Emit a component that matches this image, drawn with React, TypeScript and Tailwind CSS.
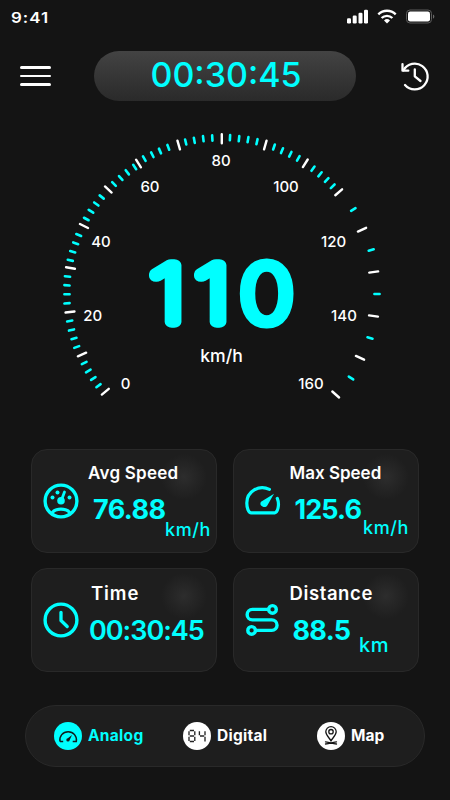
import React from "react";

type Point = [number, number];

const CENTER: Point = [222, 294];

const MAJOR: Point[] = [
  [105.3, 391.7], [82, 354.5], [70, 312], [70.5, 268], [84, 226], [108.3, 189.5],
  [138.5, 163.5], [178.7, 145], [221.8, 138.7], [265.3, 145], [305.3, 163.3],
  [338.7, 192.3], [362, 229.7], [373.7, 272], [373.5, 316], [360, 357.8], [335.7, 394.5],
];

const MINOR: Point[] = [
  [98.5, 385.7], [93.3, 378.5], [88.3, 371], [84.2, 363], [76.7, 347], [74, 338.5],
  [71.5, 330], [69.7, 321], [67, 303.3], [67, 294.3], [67, 285.3], [67.5, 276.5],
  [70.3, 260.3], [72.7, 251.7], [75.7, 243.3], [78.7, 235], [86.3, 219], [91, 211.3],
  [96.3, 204], [101.7, 197], [114, 184], [120.7, 178], [127.3, 172.3], [134.7, 167],
  [144.3, 158.7], [152.3, 154.7], [160, 151], [168.3, 147.3], [185.7, 142],
  [194.3, 140.3], [203.3, 138.7], [212.3, 138], [230, 137.7], [239, 138.7],
  [248, 139.7], [257, 141.7], [274, 147], [282, 150.7], [290.3, 154.3], [298.3, 158.3],
  [313, 168.7], [320, 174.3], [326.7, 180], [332.7, 186.3], [353.3, 209.5],
  [371.2, 250], [377, 294], [370, 338], [351, 378],
];

const LABELS: [string, number, number][] = [
  ["0", 125.6, 388.8], ["20", 92.8, 320.6], ["40", 101, 246.6], ["60", 150, 192.2],
  ["80", 221, 166], ["100", 286, 192.2], ["120", 333.5, 246.6], ["140", 344, 320.6],
  ["160", 311, 388.8],
];

function Tick({ at, half, color, width }: { at: Point; half: number; color: string; width: number }) {
  const dx = at[0] - CENTER[0];
  const dy = at[1] - CENTER[1];
  const r = Math.hypot(dx, dy);
  const ux = (dx / r) * half;
  const uy = (dy / r) * half;
  return (
    <line x1={at[0] - ux} y1={at[1] - uy} x2={at[0] + ux} y2={at[1] + uy}
      stroke={color} strokeWidth={width} strokeLinecap="round" />
  );
}

function Gauge() {
  return (
    <svg className="block h-[290px] w-[450px]" viewBox="0 120 450 290" fontFamily="Inter, sans-serif">
      {MINOR.map((p, i) => <Tick key={i} at={p} half={2.6} color="#00ffff" width={2.6} />)}
      {MAJOR.map((p, i) => <Tick key={i} at={p} half={4.5} color="#ffffff" width={2.4} />)}
      {LABELS.map(([t, x, y]) => (
        <text key={t} x={x} y={y} textAnchor="middle" fontSize="15" fontWeight="500" fill="#fff">{t}</text>
      ))}
      <g fill="#00ffff" stroke="#00ffff" strokeWidth="11.6" strokeLinejoin="round" strokeLinecap="round" fontSize="78.5" fontWeight="100">
        <text transform="translate(149.2 322.3) scale(1.25 1)">1</text>
        <text transform="translate(194.2 322.3) scale(1.25 1)">1</text>
        <text transform="translate(240 322.3) scale(1.15 1)">0</text>
      </g>
      <text x="221.5" y="362.3" textAnchor="middle" fontSize="17.6" fontWeight="500" fill="#fff">km/h</text>
    </svg>
  );
}

function StatusBar() {
  return (
    <div className="flex h-[51px] items-start justify-between pl-[11px] pr-[14px] pt-[9px]">
      <span className="mt-px origin-left scale-x-[1.13] text-[15px] font-semibold leading-none tracking-[0.9px]">9:41</span>
      <svg className="h-[15px] w-[89px]" viewBox="347 8.5 89 15" fill="#fff">
        <rect x="347" y="17.7" width="4" height="5.3" rx="1.2" />
        <rect x="352.7" y="15" width="4" height="8" rx="1.2" />
        <rect x="358.5" y="12.3" width="4" height="10.7" rx="1.2" />
        <rect x="364" y="9.3" width="4" height="13.7" rx="1.2" />
        <g fill="none" stroke="#fff" strokeWidth="2.4">
          <path d="M378.3 13.8a12.6 12.6 0 0 1 17.4 0" />
          <path d="M381.6 17.5a7.8 7.8 0 0 1 10.8 0" />
        </g>
        <path d="M384 20a4.4 4.4 0 0 1 6 0l-3 3z" />
        <rect x="406.5" y="9.5" width="25" height="13" rx="3.5" fill="none" stroke="#5b5b5b" />
        <rect x="408" y="11" width="22" height="10" rx="2.2" />
        <path d="M433 14v4.2a2.3 2.3 0 0 0 0-4.2z" fill="#6a6a6a" />
      </svg>
    </div>
  );
}

function Header() {
  return (
    <header className="flex h-[50px] items-center pl-5 pr-5">
      <button className="flex w-[31px] flex-col gap-[5.5px]" aria-label="Menu">
        <span className="h-[2.8px] w-full rounded-full bg-white" />
        <span className="h-[2.8px] w-full rounded-full bg-white" />
        <span className="h-[2.8px] w-full rounded-full bg-white" />
      </button>
      <div className="ml-[43px] flex h-[50px] w-[262px] justify-center rounded-full bg-linear-to-b from-[#434343] to-[#2a2a2a] pl-[2px] pt-[6.5px]">
        <span className="text-[34px] font-medium leading-none text-[#00ffff]">00:30:45</span>
      </div>
      <svg className="ml-auto h-[30px] w-[30px]" viewBox="400 61 30 30" fill="none" stroke="#fff" strokeWidth="2.3" strokeLinecap="round" strokeLinejoin="round">
        <path d="M403.5 70.2A12.9 12.9 0 1 1 405 85" />
        <path d="M402.5 64.2V70.7H408.3" />
        <path d="M414.8 69.5V76.3L420.5 81" />
      </svg>
    </header>
  );
}

function AvgIcon() {
  return (
    <svg className="h-9 w-9" viewBox="0 0 36 36" fill="none" stroke="#00ffff" strokeWidth="3.4" strokeLinecap="round">
      <circle cx="18" cy="18" r="15.9" />
      <path d="M9 30C12 24.8 24 24.8 27 30" strokeWidth="3.2" />
      <g fill="#00ffff" stroke="none">
        <circle cx="9.5" cy="14.6" r="2" />
        <circle cx="14.5" cy="9.5" r="2" />
        <circle cx="26.5" cy="14.6" r="2" />
        <circle cx="18" cy="17.8" r="3.8" />
      </g>
      <path d="M18.5 17L21.5 9" strokeWidth="2.8" />
    </svg>
  );
}

function MaxIcon() {
  return (
    <svg className="h-9 w-9" viewBox="0 0 36 36" fill="none" stroke="#00ffff" strokeWidth="3.2" strokeLinecap="round" strokeLinejoin="round">
      <path d="M24.4 6.4C14 1.3 1.8 8.5 1.8 20C1.8 25 3.6 29.8 6.2 29.8H29.8C32.4 29.6 35 22 32.3 15.4" />
      <path d="M29 10.8L22.3 22.5C20 26.2 13.4 22.8 16 18.8Z" fill="#00ffff" stroke="none" />
    </svg>
  );
}

function ClockIcon() {
  return (
    <svg className="h-9 w-9" viewBox="0 0 36 36" fill="none" stroke="#00ffff" strokeWidth="3.4" strokeLinecap="round" strokeLinejoin="round">
      <circle cx="18" cy="18" r="15.9" />
      <path d="M18 10.3V18.5L24.2 24.5" strokeWidth="3.3" />
    </svg>
  );
}

function RouteIcon() {
  return (
    <svg className="h-9 w-9" viewBox="0 0 36 36" fill="none" stroke="#00ffff" strokeWidth="3.4" strokeLinecap="round">
      <circle cx="27.5" cy="7.4" r="3.8" />
      <circle cx="6.6" cy="28.4" r="3.8" />
      <path d="M23.5 7.4H7.4A5.2 5.2 0 0 0 7.4 17.9H26.8A5.2 5.2 0 0 1 26.8 28.4H10.6" />
    </svg>
  );
}

type CardProps = {
  icon: React.ReactNode;
  title: string;
  value: string;
  unit?: string;
  columnClass: string;
  titleClass: string;
  valueClass: string;
  unitClass?: string;
};

function StatCard({ icon, title, value, unit, columnClass, titleClass, valueClass, unitClass = "" }: CardProps) {
  return (
    <section className="flex h-[104px] w-[186px] rounded-2xl border border-[#292929] bg-[radial-gradient(circle_23px_at_152px_27px,#2d2d2d,#262626_45%,#1e1e1e)] pl-[11px] pt-[33px]">
      <div className="h-9 w-9 shrink-0">{icon}</div>
      <div className={`flex flex-col items-start whitespace-nowrap leading-none ${columnClass}`}>
        <h2 className={`font-semibold leading-none ${titleClass}`}>{title}</h2>
        <p className={`text-[27px] leading-none text-[#00ffff] ${valueClass}`}>{value}</p>
        {unit && <span className={`leading-none text-[#00ffff] ${unitClass}`}>{unit}</span>}
      </div>
    </section>
  );
}

function BottomNav() {
  return (
    <nav className="mx-[25px] flex h-[62px] items-center rounded-full border border-[#292929] bg-[#1e1e1e] pl-7 text-[15.5px] font-bold leading-none">
      <div className="flex w-[129px] items-center gap-[6px] text-[#00ffff]">
        <svg className="h-7 w-7" viewBox="0 0 28 28" fill="none" stroke="#101b1b" strokeWidth="1.5">
          <circle cx="14" cy="14" r="14" fill="#00ffff" stroke="none" />
          <path d="M6 19.5A8.3 8.3 0 1 1 22.3 19.5H18.7M6 19.5H9.2" />
          <path d="M18 13L15.7 18A1.7 1.7 0 1 1 13.8 16.2Z" fill="#101b1b" stroke="none" />
        </svg>
        <span className="tracking-[0.3px]">Analog</span>
      </div>
      <div className="flex w-[134px] items-center gap-[6px]">
        <svg className="h-7 w-7" viewBox="0 0 28 28" fill="none" stroke="#252525" strokeWidth="1.35">
          <circle cx="14" cy="14" r="14" fill="#fff" stroke="none" />
          <path d="M6.8 8.5H11M6.8 14H11M6.8 19.5H11" />
          <path d="M6 9.2V13.2M6 14.8V18.9M11.8 9.2V13.2M11.8 14.8V18.9M16.4 9.2V13.2M22 9.2V13.2M22 14.8V19.5M17 14H21.2" />
        </svg>
        <span className="tracking-[0.25px]">Digital</span>
      </div>
      <div className="flex items-center gap-[6px]">
        <svg className="h-7 w-7" viewBox="0 0 28 28" fill="none" stroke="#161616" strokeWidth="1.3" strokeLinecap="round">
          <circle cx="14" cy="14" r="14" fill="#fff" stroke="none" />
          <path d="M14 18.8C12 15.5 8.8 13 8.8 9.8A5.2 5.2 0 0 1 19.2 9.8C19.2 13 16 15.5 14 18.8Z" />
          <circle cx="14" cy="9.7" r="2.2" />
          <path d="M8.5 19.8C11 20 16 22 19.5 22M19.5 19.8C17 20 12 22 8.5 22" />
        </svg>
        <span>Map</span>
      </div>
    </nav>
  );
}

export default function App() {
  return (
    <main className="h-[800px] w-[450px] overflow-hidden bg-[#141414] font-[Inter,sans-serif] text-white">
      <StatusBar />
      <Header />
      <div className="mt-[19px]"><Gauge /></div>
      <div className="ml-[31px] mt-[39px] grid w-[388px] grid-cols-[186px_186px] gap-x-[15.5px] gap-y-[15px]">
        <StatCard icon={<AvgIcon />} title="Avg Speed" value="76.88" unit="km/h"
          columnClass="ml-[9px] -mt-[18.5px]" titleClass="text-[17px] tracking-[0.25px]" valueClass="ml-[5px] mt-[14.5px] font-bold tracking-[-0.6px]" unitClass="ml-[77px] -mt-[2px] text-[18px] font-medium tracking-[0.6px]" />
        <StatCard icon={<MaxIcon />} title="Max Speed" value="125.6" unit="km/h"
          columnClass="ml-[9px] -mt-[18.5px]" titleClass="text-[17px]" valueClass="ml-[5px] mt-[14.5px] font-bold tracking-[-0.9px]" unitClass="ml-[73.5px] -mt-[4px] text-[18px] font-medium tracking-[0.6px]" />
        <StatCard icon={<ClockIcon />} title="Time" value="00:30:45"
          columnClass="ml-[10px] -mt-[18px]" titleClass="ml-[2px] text-[18.5px] tracking-[0.9px]" valueClass="mt-[14px] font-semibold tracking-[-1px]" />
        <StatCard icon={<RouteIcon />} title="Distance" value="88.5" unit="km"
          columnClass="ml-[9px] -mt-[18px]" titleClass="text-[18.5px] tracking-[0.6px]" valueClass="ml-[3px] mt-[14px] font-bold tracking-[-0.7px]" unitClass="ml-[69.5px] -mt-[9px] text-[20px] font-medium tracking-[0.5px]" />
      </div>
      <div className="mt-[33px]"><BottomNav /></div>
    </main>
  );
}
